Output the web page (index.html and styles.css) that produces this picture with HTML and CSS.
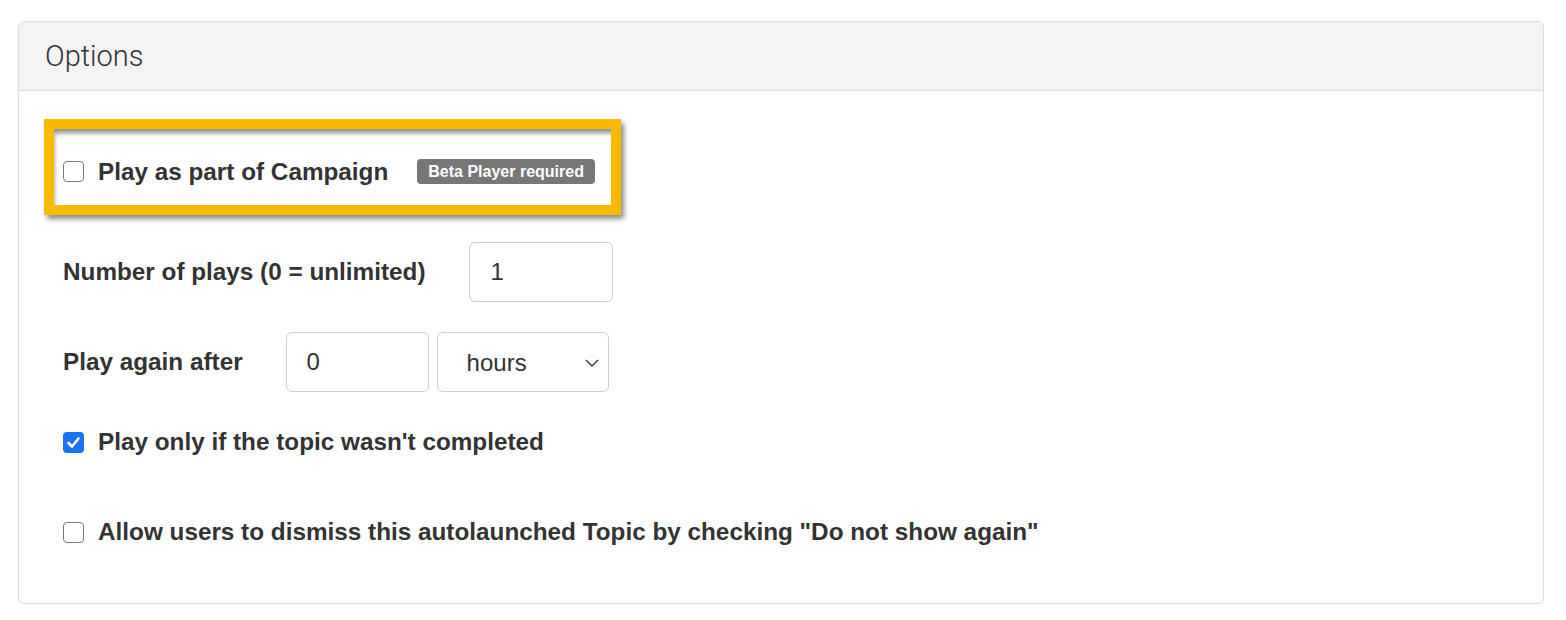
FILE: index.html
```html
<!DOCTYPE html>
<html>
<head>
<meta charset="utf-8">
<link rel="stylesheet" href="styles.css">
</head>
<body>
<div class="card">
  <div class="card-header">Options</div>
  <div class="card-body">
    <div class="highlight">
      <span class="check"></span>
      <span class="label">Play as part of Campaign</span>
      <span class="badge">Beta Player required</span>
    </div>
    <div class="row row-plays">
      <span class="label">Number of plays (0 = unlimited)</span>
      <input class="field field-num" type="text" value="1">
    </div>
    <div class="row row-again">
      <span class="label">Play again after</span>
      <div class="inputs">
        <input class="field field-num" type="text" value="0">
        <div class="select-wrap">
          <select class="field field-select"><option>hours</option></select>
          <svg class="chevron" width="14" height="8" viewBox="0 0 14 8"><path d="M1 1 L7 7 L13 1" fill="none" stroke="#333" stroke-width="1.4"/></svg>
        </div>
      </div>
    </div>
    <div class="row row-check row-completed">
      <span class="check checked"><svg width="21" height="21" viewBox="0 0 21 21"><path d="M5.5 11 L9 14.5 L15.5 6.5" fill="none" stroke="#fff" stroke-width="2.6" stroke-linecap="round" stroke-linejoin="round"/></svg></span>
      <span class="label">Play only if the topic wasn't completed</span>
    </div>
    <div class="row row-check row-dismiss">
      <span class="check"></span>
      <span class="label">Allow users to dismiss this autolaunched Topic by checking "Do not show again"</span>
    </div>
  </div>
</div>
</body>
</html>
```

FILE: styles.css
```css
* { box-sizing: border-box; }
html, body { margin: 0; padding: 0; background: #fff; }
body {
  font-family: "Liberation Sans", Arial, sans-serif;
  color: #333;
  padding: 21px 22px 0 18px;
}
.card {
  border: 1px solid #dcdcdc;
  border-radius: 6px;
  overflow: hidden;
  box-shadow: 0 1px 2px rgba(0,0,0,0.05);
}
.card-header {
  background: #f4f4f4;
  border-bottom: 1px solid #dcdcdc;
  height: 69px;
  padding: 18px 0 0 26px;
  font-family: Roboto, "Liberation Sans", sans-serif;
  font-weight: 300;
  font-size: 29px;
  line-height: 32px;
  color: #333;
}
.card-body {
  padding: 28px 25px 56px 25px;
}
.highlight {
  display: inline-flex;
  align-items: center;
  border: 10px solid #fbb900;
  height: 96px;
  padding: 9px 16px 0 9px;
  box-shadow: inset 2px 6px 5px -2px rgba(0,0,0,0.45), 3px 4px 5px rgba(0,0,0,0.45);
  background: #fff;
}
.label {
  font-weight: 700;
  font-size: 24.3px;
  line-height: 30px;
  white-space: nowrap;
}
.check {
  flex: none;
  display: inline-block;
  width: 21px;
  height: 21px;
  border: 1.5px solid #7a7a7a;
  border-radius: 4px;
  background: #fff;
  margin-right: 14px;
}
.check.checked {
  border: none;
  background: #1a73f0;
}
.check svg { display: block; }
.badge {
  margin-left: 29px;
  background: #777;
  color: #fff;
  font-weight: 700;
  font-size: 16px;
  line-height: 25px;
  height: 25px;
  padding: 0 11px;
  border-radius: 4px;
  white-space: nowrap;
}
.row {
  display: flex;
  align-items: center;
  padding-left: 19px;
}
.row-plays { margin-top: 27px; gap: 44px; }
.row-again { margin-top: 30px; gap: 43px; }
.inputs { display: flex; gap: 8px; }
.field {
  height: 60px;
  border: 1px solid #cfcfcf;
  border-radius: 6px;
  background: #fff;
  font-family: "Liberation Sans", Arial, sans-serif;
  font-size: 24px;
  color: #333;
  padding: 0 20px;
  outline: none;
}
.field-num { width: 144px; }
.row-again .field-num { width: 143px; }
.select-wrap { position: relative; }
.field-select {
  width: 172px;
  appearance: none;
  -webkit-appearance: none;
  padding-left: 29px;
}
.chevron {
  position: absolute;
  right: 10px;
  top: 27px;
}
.row-check { height: 30px; }
.row-completed { margin-top: 35px; }
.row-dismiss { margin-top: 60px; }
```
